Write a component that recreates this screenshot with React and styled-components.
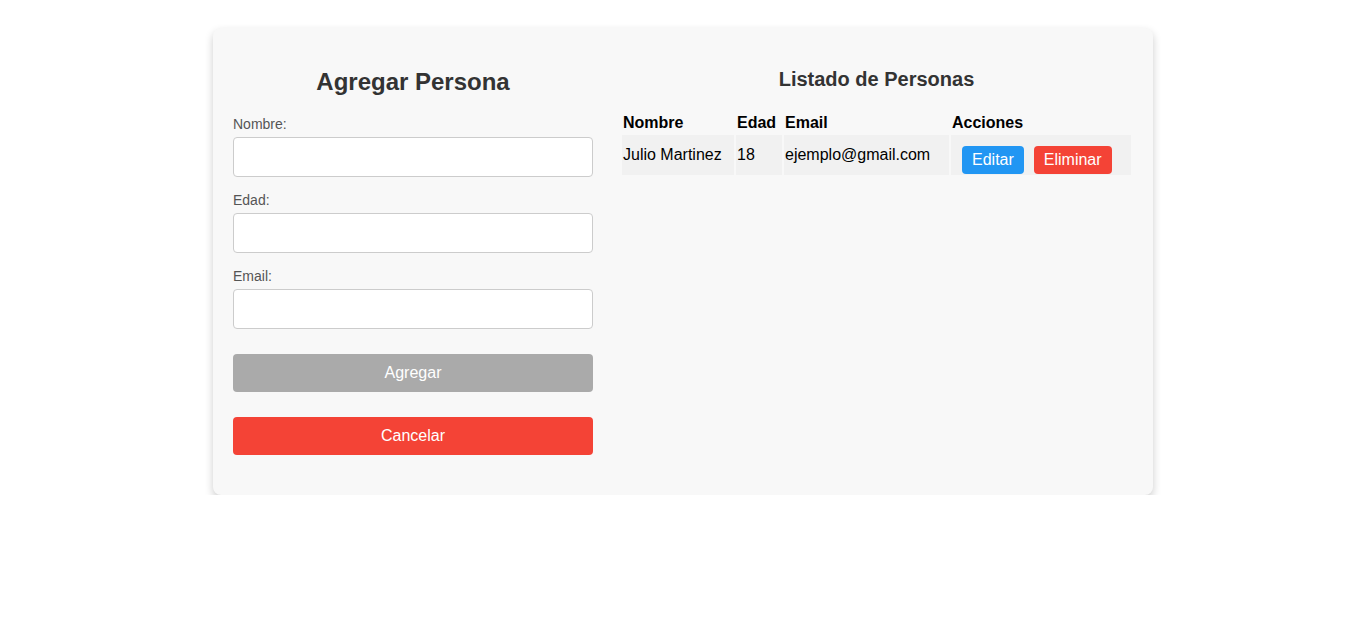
import React from 'react';
import styled, { createGlobalStyle } from 'styled-components';

const GlobalStyle = createGlobalStyle`
    body {
        margin: 8px;
        background: #fff;
        font-family: "Liberation Sans", Arial, sans-serif;
    }
`;

const Card = styled.div`
    width: 940px;
    box-sizing: border-box;
    margin: 20px auto 0;
    padding: 20px;
    background: #f8f8f8;
    border-radius: 8px;
    box-shadow: 0 4px 8px rgba(0, 0, 0, 0.2);
    display: grid;
    grid-template-columns: 360px 1fr;
    column-gap: 27px;
    align-items: start;
`;

const Form = styled.form`
    display: flex;
    flex-direction: column;
    padding-bottom: 20px;
`;

const Title = styled.h2`
    margin: 20px 0;
    font-size: 24px;
    color: #333;
    text-align: center;
`;

const Field = styled.div`
    margin-bottom: 15px;
`;

const Label = styled.label`
    display: block;
    margin-bottom: 5px;
    font-size: 14px;
    color: #555;
`;

const Input = styled.input`
    display: block;
    width: 100%;
    height: 40px;
    box-sizing: border-box;
    padding: 10px;
    font-size: 14px;
    font-family: inherit;
    background: #fff;
    border: 1px solid #ccc;
    border-radius: 4px;
`;

const FormButton = styled.button`
    margin-top: ${({ first }) => (first ? '10px' : '25px')};
    height: 38px;
    border: none;
    border-radius: 4px;
    font-family: inherit;
    font-size: 16px;
    color: #fff;
    background: ${({ color }) => color};
`;

const List = styled.div``;

const ListTitle = styled.h3`
    margin: 20px 0 20px;
    font-size: 20px;
    color: #333;
    text-align: center;
`;

const Table = styled.table`
    width: 100%;
    table-layout: fixed;
    border-spacing: 2px;
    font-size: 16px;
    color: #000;
`;

const Th = styled.th`
    padding: 1px;
    text-align: left;
    width: ${({ w }) => w}px;
`;

const Td = styled.td`
    padding: 1px;
    background: #f1f1f1;
    vertical-align: middle;
    white-space: nowrap;
`;

const ActionButton = styled.button`
    margin: 10px 0 0 10px;
    padding: 5px 10px;
    border: none;
    border-radius: 4px;
    font-family: inherit;
    font-size: 16px;
    color: #fff;
    background: ${({ color }) => color};
`;

const personas = [{ nombre: 'Julio Martinez', edad: 18, email: 'ejemplo@gmail.com' }];

const App = () => {
    return (
        <>
            <GlobalStyle />
            <Card>
                <Form onSubmit={(e) => e.preventDefault()}>
                    <Title>Agregar Persona</Title>
                    <Field>
                        <Label>Nombre:</Label>
                        <Input type="text" />
                    </Field>
                    <Field>
                        <Label>Edad:</Label>
                        <Input type="number" />
                    </Field>
                    <Field>
                        <Label>Email:</Label>
                        <Input type="email" />
                    </Field>
                    <FormButton first color="#aaaaaa">Agregar</FormButton>
                    <FormButton type="button" color="#f44336">Cancelar</FormButton>
                </Form>
                <List>
                    <ListTitle>Listado de Personas</ListTitle>
                    <Table>
                        <thead>
                            <tr>
                                <Th w={110}>Nombre</Th>
                                <Th w={44}>Edad</Th>
                                <Th w={163}>Email</Th>
                                <Th w={178}>Acciones</Th>
                            </tr>
                        </thead>
                        <tbody>
                            {personas.map((p) => (
                                <tr key={p.email}>
                                    <Td>{p.nombre}</Td>
                                    <Td>{p.edad}</Td>
                                    <Td>{p.email}</Td>
                                    <Td>
                                        <ActionButton color="#2196f3">Editar</ActionButton>
                                        <ActionButton color="#f44336">Eliminar</ActionButton>
                                    </Td>
                                </tr>
                            ))}
                        </tbody>
                    </Table>
                </List>
            </Card>
        </>
    );
};

export default App;
